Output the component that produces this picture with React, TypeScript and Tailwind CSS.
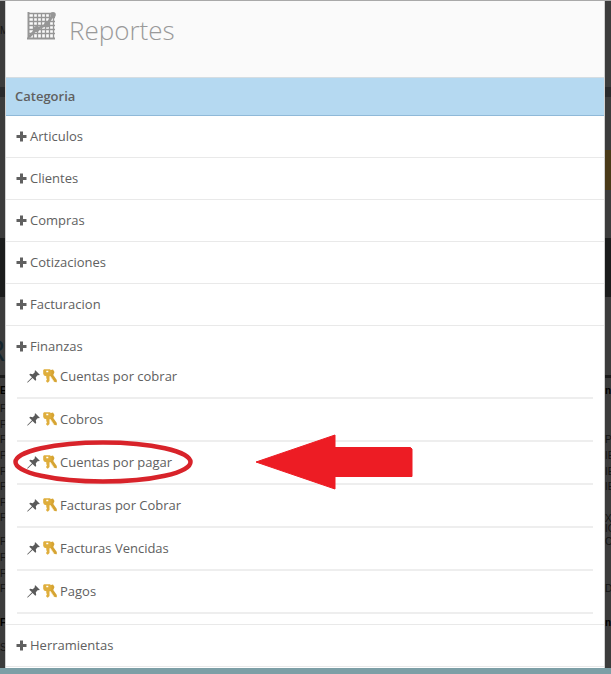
import React from "react";

const TEXT = "font-['Open_Sans','Noto_Sans',sans-serif]";

type Line = { text: string; top: number; bold?: boolean };

const LEFT_LINES: Line[] = [
  { text: "M", top: 22 },
  { text: "E", top: 382, bold: true },
  { text: "F", top: 400 },
  { text: "F", top: 416 },
  { text: "F", top: 431 },
  { text: "F", top: 447 },
  { text: "F", top: 463 },
  { text: "F", top: 478 },
  { text: "F", top: 494 },
  { text: "F", top: 509 },
  { text: "F", top: 533 },
  { text: "F", top: 549 },
  { text: "F", top: 565 },
  { text: "F", top: 580 },
  { text: "F", top: 614, bold: true },
  { text: "S", top: 639 },
];

const RIGHT_LINES: Line[] = [
  { text: "n", top: 382, bold: true },
  { text: "P", top: 431 },
  { text: "IE", top: 447 },
  { text: "IE", top: 463 },
  { text: "IE", top: 478 },
  { text: "X", top: 510 },
  { text: "IC", top: 520 },
  { text: "CI", top: 533 },
  { text: "DI", top: 580 },
  { text: "n", top: 614, bold: true },
];

function Backdrop({ side }: { side: "left" | "right" }) {
  const right = side === "right";
  const lines = right ? RIGHT_LINES : LEFT_LINES;
  return (
    <div
      aria-hidden="true"
      className={`relative flex shrink-0 flex-col overflow-hidden bg-[#3c3c3c] ${right ? "w-[6px]" : "w-[5px]"}`}
    >
      <div className="h-[86px]" />
      <div className="h-[10px] bg-[#2a2a2c]" />
      <div className="h-[53px]" />
      <div className={`h-10 ${right ? "bg-[#4a3a18]" : ""}`} />
      <div className="h-12" />
      <div className="h-[59px] bg-[#1b1c1c]" />
      <div className="h-[78px]" />
      <div className="h-[3px] bg-[#1a1a1a]" />
      {!right && (
        <span className="absolute top-[332px] right-0 font-['Open_Sans',sans-serif] text-[30px] leading-[34px] text-[#14252d]">
          R
        </span>
      )}
      {lines.map((l) => (
        <span
          key={l.top}
          style={{ top: l.top }}
          className={`absolute left-0 font-['Liberation_Sans',sans-serif] text-[10px] leading-4 ${l.bold ? "font-bold text-black" : "text-[#141414]"}`}
        >
          {l.text}
        </span>
      ))}
    </div>
  );
}

function ChartIcon() {
  return (
    <svg width="29" height="28" viewBox="0 0 29 28" className="shrink-0" fill="none" stroke="#969696">
      <path d="M1.5 0V27M0 26.5H28" strokeWidth="2" />
      <path
        d="M6.500 1V26M10.500 1V26M14.500 1V26M18.500 1V26M22.500 1V26M26.500 4V26M2 1.500H25M2 5.500H28M2 9.500H28M2 13.500H28M2 17.500H28M2 21.500H28"
        strokeWidth="1.300"
      />
      <path d="M2 25L9.500 17L20 12.500L26 3" strokeWidth="2.600" />
      <g fill="#969696" stroke="none">
        <circle cx="9.500" cy="17" r="2.900" />
        <circle cx="20" cy="12.500" r="2.900" />
        <circle cx="26" cy="2.800" r="2.800" />
      </g>
    </svg>
  );
}

function PlusIcon() {
  return (
    <svg width="11" height="11" viewBox="0 0 11 11" className="shrink-0" fill="#606060">
      <path d="M4 0.500h3v3.500h3.500v3H7v3.500H4V7H0.500V4H4z" />
    </svg>
  );
}

function PinIcon() {
  return (
    <svg width="13" height="13" viewBox="0 0 13 13" className="shrink-0" fill="#5a5a5a">
      <path d="M8.300 0.200L12.800 4.700L12 5.300L10.900 5L8.800 7.200L9.200 9.900L8.300 10.700L5.600 8L0.800 12.600L0.200 12.500L0.300 11.900L5 7.300L2.300 4.700L3.100 3.800L5.800 4.200L8 2.100L7.600 1z" />
    </svg>
  );
}

function KeysIcon() {
  return (
    <svg width="14" height="14" viewBox="0 0 14 14" className="shrink-0">
      <path d="M6 1.500L10 0.500L11.500 3L10.300 6L13.800 11V13.300L11.300 13L6.500 6z" fill="#d6a433" />
      <path
        fillRule="evenodd"
        d="M1 0.300H7L8.500 1.800V5.500L7 7L6.500 7.500V12L4.800 13.800L3.300 12.700V11.200L4 10.200L3.300 9.200V7.200L1 6.500L0.200 4.800V1.300zM3.300 1.700V3.300H5.300V1.700z"
        fill="#dfae3c"
      />
      <path d="M7.200 7L11 12.800" stroke="#f7e6b8" strokeWidth="0.800" />
    </svg>
  );
}

const REPORTS = [
  "Cuentas por cobrar",
  "Cobros",
  "Cuentas por pagar",
  "Facturas por Cobrar",
  "Facturas Vencidas",
  "Pagos",
];

function Category({ name, children }: { name: string; children?: React.ReactNode }) {
  return (
    <li className={`border-b border-[#e9e9e9] pt-[10px] pl-[10px] ${children ? "pr-[11px] pb-[10px]" : "pb-[11px]"}`}>
      <button type="button" className="flex h-5 items-center gap-[3px] text-[13px] leading-5">
        <PlusIcon />
        {name}
      </button>
      {children}
    </li>
  );
}

function Highlight() {
  return (
    <>
      <svg
        aria-hidden="true"
        className="pointer-events-none absolute -top-[2px] -left-1"
        width="180"
        height="44"
        viewBox="0 0 180 44"
      >
        <ellipse cx="90" cy="22" rx="87.500" ry="19.500" fill="none" stroke="#d8232a" strokeWidth="4.500" />
      </svg>
      <svg
        aria-hidden="true"
        className="pointer-events-none absolute -top-2 left-[238px]"
        width="158"
        height="56"
        viewBox="0 0 158 56"
      >
        <path
          d="M1 28L80 1V13.500H155.500L157 15V42.500H80V55z"
          fill="#ed1c24"
          stroke="#ed1c24"
          strokeLinejoin="round"
        />
      </svg>
    </>
  );
}

export default function App() {
  return (
    <div className={`bg-[#7d9fa6] pb-[6px] text-[#606060] ${TEXT}`}>
      <div className="flex border-t border-[#a9a9a9]">
        <Backdrop side="left" />
        <main className="min-w-0 flex-1 border-x border-[#d0d0d0] bg-white pb-px">
          <header className="flex h-[77px] items-start gap-[13px] border-b border-[#d5dde2] bg-[#fafafa] pt-[11px] pl-[21px]">
            <ChartIcon />
            <h1 className="text-[26px] leading-9 font-light text-[#999999]">Reportes</h1>
          </header>
          <h2 className="h-[38px] border-b border-[#8fb9d8] bg-[#b5d9f1] pl-[9px] text-[13px] leading-[37px] font-semibold">
            Categoria
          </h2>
          <ul>
            <Category name="Articulos" />
            <Category name="Clientes" />
            <Category name="Compras" />
            <Category name="Cotizaciones" />
            <Category name="Facturacion" />
            <Category name="Finanzas">
              <ul className="pl-px">
                {REPORTS.map((name) => (
                  <li
                    key={name}
                    className="relative flex h-[43px] items-start border-b-2 border-[#eeeeee] pt-[10px] pl-[10px]"
                  >
                    <a href="#" className="flex items-center gap-[3px] text-[13px] leading-5">
                      <PinIcon />
                      <KeysIcon />
                      {name}
                    </a>
                    {name === "Cuentas por pagar" && <Highlight />}
                  </li>
                ))}
              </ul>
            </Category>
            <Category name="Herramientas" />
          </ul>
        </main>
        <Backdrop side="right" />
      </div>
    </div>
  );
}
